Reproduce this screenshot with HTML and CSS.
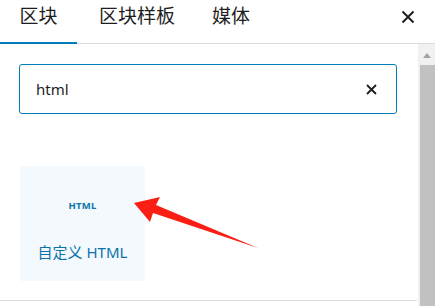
FILE: index.html
```html
<!DOCTYPE html>
<html lang="zh">
<head>
<meta charset="utf-8">
<link rel="stylesheet" href="styles.css">
</head>
<body>
<div class="panel">
  <div class="tabs">
    <div class="tab active">区块</div>
    <div class="tab t2">区块样板</div>
    <div class="tab t3">媒体</div>
    <div class="close">
      <svg width="14" height="14" viewBox="0 0 14 14"><path d="M1.5 1.5 L12.5 12.5 M12.5 1.5 L1.5 12.5" stroke="#1e1e1e" stroke-width="2"/></svg>
    </div>
  </div>
  <div class="body">
    <div class="content">
      <div class="search">
        <span class="query">html</span>
        <svg class="clear" width="11" height="11" viewBox="0 0 11 11"><path d="M1 1 L10 10 M10 1 L1 10" stroke="#1e1e1e" stroke-width="1.8"/></svg>
      </div>
      <div class="results">
        <div class="card">
          <div class="icon">HTML</div>
          <div class="label">自定义 HTML</div>
        </div>
      </div>
      <div class="bottom-line"></div>
    </div>
    <div class="scrollbar">
      <div class="up"></div>
      <div class="thumb"></div>
    </div>
  </div>
  <svg class="arrow" width="435" height="306" viewBox="0 0 435 306">
    <polygon points="134,203 160,197 156,205 258,248 153,213 150,222" fill="#fa1e14"/>
  </svg>
</div>
</body>
</html>
```

FILE: styles.css
```css
html, body {
  margin: 0;
  padding: 0;
  background: #fff;
}
body {
  font-family: "Noto Sans", "Noto Sans CJK SC", sans-serif;
  color: #1e1e1e;
  width: 435px;
  height: 306px;
  overflow: hidden;
}
.panel {
  position: relative;
  width: 435px;
  height: 306px;
  display: flex;
  flex-direction: column;
}
.tabs {
  height: 43px;
  border-bottom: 1px solid #dcdcde;
  display: flex;
  align-items: stretch;
  flex-shrink: 0;
}
.tab {
  font-family: "Noto Sans CJK SC", sans-serif;
  font-size: 19px;
  line-height: 30px;
  padding: 0 20px;
  box-sizing: border-box;
  border-bottom: 2px solid transparent;
  margin-bottom: -1px;
}
.tab.active {
  width: 77px;
  padding: 0;
  text-align: center;
  border-bottom-color: #007cba;
}
.tab.t2 {
  padding-left: 22px;
}
.tab.t3 {
  padding-left: 17px;
}
.close {
  margin-left: auto;
  margin-right: 20px;
  padding-top: 7px;
}
.body {
  flex: 1;
  display: flex;
  min-height: 0;
}
.content {
  flex: 1;
  padding: 20px 0 0 19px;
  display: flex;
  flex-direction: column;
}
.search {
  width: 378px;
  height: 50px;
  box-sizing: border-box;
  border: 1.5px solid #007cba;
  border-radius: 3px;
  display: flex;
  align-items: center;
  padding: 0 19px 0 16px;
}
.query {
  font-size: 15px;
  flex: 1;
  padding-bottom: 1px;
}
.clear {
  display: block;
}
.results {
  padding-top: 52px;
  padding-left: 1px;
}
.card {
  width: 125px;
  height: 115px;
  background: #f3f9fc;
  border-radius: 2px;
  display: flex;
  flex-direction: column;
  align-items: center;
  color: #0b73ab;
}
.icon {
  font-size: 9.5px;
  font-weight: 700;
  margin-top: 34px;
  line-height: 12px;
  letter-spacing: 0.2px;
}
.label {
  font-family: "Noto Sans", "Noto Sans CJK SC", sans-serif;
  font-size: 15px;
  line-height: 20px;
  margin-top: 30px;
}
.bottom-line {
  margin-top: 19px;
  margin-left: -19px;
  height: 1px;
  background: #dcdcde;
}
.scrollbar {
  width: 17px;
  margin-left: 1px;
  background: #f1f1f1;
  display: flex;
  flex-direction: column;
  align-items: center;
}
.up {
  width: 0;
  height: 0;
  margin-top: 9px;
  border-left: 4.5px solid transparent;
  border-right: 4.5px solid transparent;
  border-bottom: 5px solid #a3a3a3;
}
.thumb {
  margin-top: 7px;
  margin-left: 2px;
  width: 16px;
  flex: 1;
  background: #c1c1c1;
}
.arrow {
  position: absolute;
  left: 0;
  top: 0;
  pointer-events: none;
}
```
